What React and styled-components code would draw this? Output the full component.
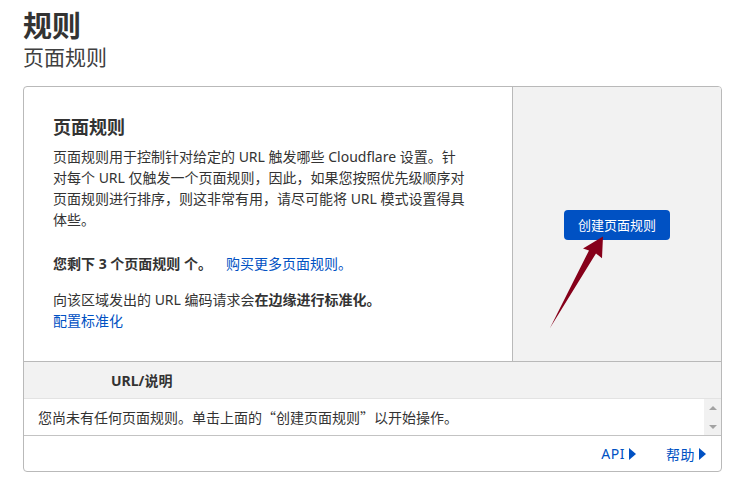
import React from "react";
import styled, { createGlobalStyle } from "styled-components";

const Global = createGlobalStyle`
  html, body { margin: 0; padding: 0; background: #fff; }
  body {
    font-family: "Noto Sans", "Noto Sans CJK SC", sans-serif;
    color: #333;
    -webkit-font-smoothing: antialiased;
  }
`;

const Page = styled.div`
  padding: 10px 22px 0 23px;
  width: 699px;
`;

const Title = styled.h1`
  margin: 0;
  font-size: 29px;
  line-height: 32px;
  font-weight: 700;
  color: #333;
`;

const Subtitle = styled.h2`
  margin: 0;
  font-size: 21px;
  line-height: 30px;
  font-weight: 400;
  color: #404040;
`;

const Card = styled.div`
  margin-top: 14px;
  border: 1px solid #b9b9b9;
  border-radius: 4px;
  overflow: hidden;
  background: #fff;
`;

const Top = styled.div`
  display: flex;
  align-items: stretch;
`;

const Info = styled.div`
  padding: 28px 0 30px 29px;
  box-sizing: border-box;
  flex: none;
  width: 488px;
`;

const Heading = styled.h3`
  margin: 0 0 7px;
  font-size: 18px;
  line-height: 24px;
  font-weight: 700;
  color: #333;
`;

const Para = styled.p`
  margin: ${(p) => p.$mt || 0}px 0 0;
  font-size: 14px;
  line-height: 21px;
  color: #333;
`;

const Strong = styled.b`
  font-weight: 700;
`;

const Link = styled.a`
  color: #0051c3;
  text-decoration: none;
  margin-left: ${(p) => p.$ml || 0}px;
`;

const Action = styled.div`
  position: relative;
  flex: 1;
  background: #f2f2f2;
  border-left: 1px solid #b9b9b9;
  display: flex;
  align-items: center;
  justify-content: center;
`;

const Button = styled.button`
  height: 30px;
  padding: 0 14px;
  border: none;
  border-radius: 4px;
  background: #0051c3;
  color: #fff;
  font-family: inherit;
  font-size: 13px;
  cursor: pointer;
  margin-top: 1px;
`;

const Arrow = styled.svg`
  position: absolute;
  left: 0;
  top: 0;
  width: 100%;
  height: 100%;
  pointer-events: none;
`;

const HeaderRow = styled.div`
  height: 36px;
  display: flex;
  align-items: center;
  padding-left: 87px;
  background: #f2f2f2;
  border-top: 1px solid #b9b9b9;
  border-bottom: 1px solid #e3e3e3;
  font-size: 14px;
  font-weight: 700;
  color: #333;
`;

const BodyRow = styled.div`
  height: 36px;
  display: flex;
  border-bottom: 1px solid #c3c3c3;
`;

const Cell = styled.div`
  flex: 1;
  display: flex;
  align-items: center;
  padding-left: 14px;
  font-size: 14px;
  color: #333;
`;

const Quote = styled.span`
  font-family: "Noto Sans CJK SC", sans-serif;
`;

const Scrollbar = styled.div`
  width: 17px;
  background: #f1f1f1;
  display: flex;
  flex-direction: column;
  align-items: center;
  justify-content: space-between;
  padding: 7px 0 6px;
  box-sizing: border-box;
`;

const ScrollArrow = styled.span`
  width: 0;
  height: 0;
  border-left: 4px solid transparent;
  border-right: 4px solid transparent;
  ${(p) =>
    p.$down
      ? "border-top: 4px solid #a3a3a3;"
      : "border-bottom: 4px solid #a3a3a3;"}
`;

const Footer = styled.div`
  height: 35px;
  display: flex;
  align-items: center;
  justify-content: flex-end;
  gap: 30px;
  padding-right: 15px;
`;

const FootLink = styled.a`
  display: flex;
  align-items: center;
  gap: 4px;
  color: #0051c3;
  font-size: 14px;
  text-decoration: none;
  letter-spacing: 0.5px;
`;

const Tri = styled.span`
  width: 0;
  height: 0;
  border-top: 6px solid transparent;
  border-bottom: 6px solid transparent;
  border-left: 7px solid #0051c3;
`;

export default function App() {
  return (
    <>
      <Global />
      <Page>
        <Title>规则</Title>
        <Subtitle>页面规则</Subtitle>
        <Card>
          <Top>
            <Info>
              <Heading>页面规则</Heading>
              <Para>
                页面规则用于控制针对给定的 URL 触发哪些 Cloudflare 设置。针
                <br />
                对每个 URL 仅触发一个页面规则，因此，如果您按照优先级顺序对
                <br />
                页面规则进行排序，则这非常有用，请尽可能将 URL 模式设置得具
                <br />
                体些。
              </Para>
              <Para $mt={23}>
                <Strong>您剩下 3 个页面规则 个。</Strong>
                <Link href="#" $ml={14}>购买更多页面规则。</Link>
              </Para>
              <Para $mt={15}>
                向该区域发出的 URL 编码请求会<Strong>在边缘进行标准化。</Strong>
                <br />
                <Link href="#">配置标准化</Link>
              </Para>
            </Info>
            <Action>
              <Button>创建页面规则</Button>
              <Arrow viewBox="0 0 208 275" preserveAspectRatio="none">
                <polygon
                  points="90,150 89,172 83,167 37,242 76,164 70,162"
                  fill="#86001a"
                />
              </Arrow>
            </Action>
          </Top>
          <HeaderRow>URL/说明</HeaderRow>
          <BodyRow>
            <Cell>
              您尚未有任何页面规则。单击上面的<Quote>“创建页面规则”</Quote>以开始操作。
            </Cell>
            <Scrollbar>
              <ScrollArrow />
              <ScrollArrow $down />
            </Scrollbar>
          </BodyRow>
          <Footer>
            <FootLink href="#">API<Tri /></FootLink>
            <FootLink href="#">帮助<Tri /></FootLink>
          </Footer>
        </Card>
      </Page>
    </>
  );
}
